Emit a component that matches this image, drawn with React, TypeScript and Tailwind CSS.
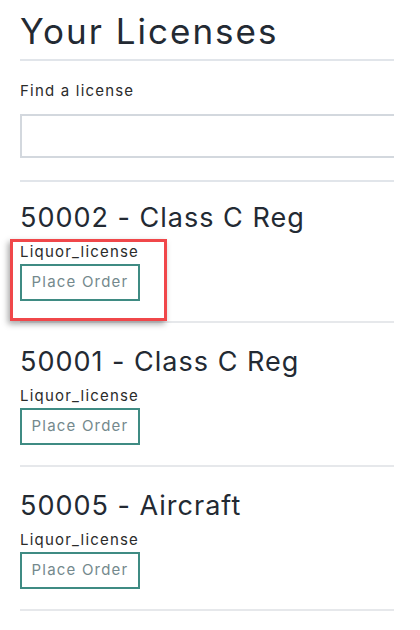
import React from 'react';

const licenses = [
  { id: '50002', name: 'Class C Reg', type: 'Liquor_license', highlight: true },
  { id: '50001', name: 'Class C Reg', type: 'Liquor_license', highlight: false },
  { id: '50005', name: 'Aircraft', type: 'Liquor_license', highlight: false },
];

const font = { fontFamily: 'Inter, "Open Sans", sans-serif' };

const App = () => {
  return (
    <div className="w-[420px] h-[630px] bg-white overflow-hidden" style={font}>
      <div className="ml-5 w-[374px]">
        <h1 className="pt-[10px] text-[35px] leading-[42px] font-normal text-[#232a33] tracking-[2px]">Your Licenses</h1>
        <div className="mt-[7px] h-[2px] bg-[#e1e5ea]" />

        {/* Search */}
        <label className="block mt-[20px] text-[15px] leading-[20px] text-[#2b2b2b] tracking-[1.2px]">Find a license</label>
        <div className="mt-[13px] w-[374px] overflow-hidden">
          <input type="text" className="block w-[420px] h-[44px] border-2 border-[#d3d8de] outline-none" />
        </div>
        <div className="mt-[22px] h-[2px] bg-[#e1e5ea]" />

        {/* License list */}
        {licenses.map((lic, i) => (
          <div key={lic.id}>
            <div className={`relative pb-[20px] ${i === 0 ? 'pt-[20px]' : 'pt-[23px]'}`}>
              <h2 className="text-[27px] leading-[32px] font-normal text-[#232a33] tracking-[1px]">
                {lic.id} - {lic.name}
              </h2>
              <p className="mt-[10px] text-[15px] leading-[16px] text-[#2b2b2b] tracking-[1.2px]">{lic.type}</p>
              <button className="mt-[4px] w-[120px] h-[37px] border-2 border-[#3f8b83] text-[15px] text-[#74898d] tracking-[1.2px] bg-white">
                Place Order
              </button>
              {lic.highlight && (
                <div className="absolute left-[-10px] top-[57px] w-[157px] h-[82px] border-[3px] border-[#f0474a] shadow-[-2px_3px_6px_rgba(0,0,0,0.35)] pointer-events-none" />
              )}
            </div>
            <div className="h-[2px] bg-[#e6e8eb]" />
          </div>
        ))}
      </div>
    </div>
  );
};

export default App;
